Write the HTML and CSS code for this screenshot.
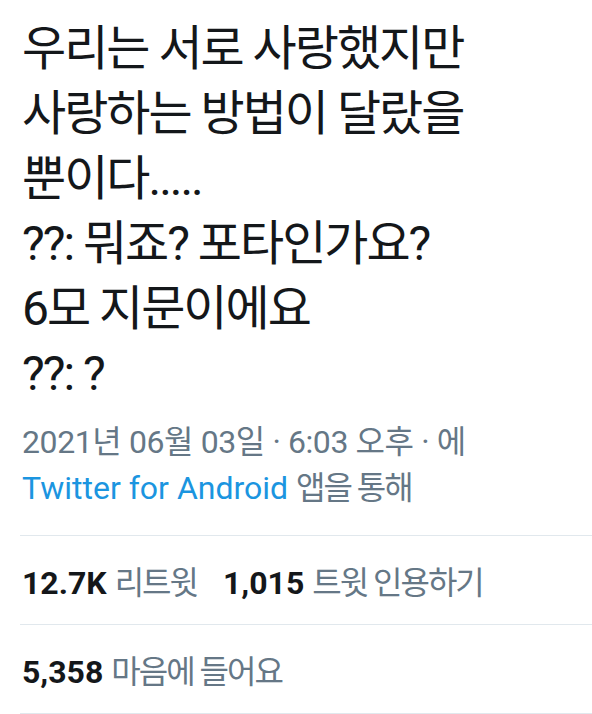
FILE: index.html
```html
<!DOCTYPE html>
<html lang="ko">
<head>
    <meta charset="UTF-8">
    <meta name="viewport" content="width=device-width, initial-scale=1.0">
    <title>트윗</title>
    <link rel="stylesheet" href="styles.css">
</head>
<body>

<div class="tweet">
    <p class="tweet-text">
        우리는 서로 사랑했지만<br>
        사랑하는 방법이 달랐을<br>
        뿐이다.....<br>
        ??: 뭐죠? 포타인가요?<br>
        6모 지문이에요<br>
        ??: ?
    </p>

    <div class="meta">
        <div class="fecha">2021년 06월 03일 · 6:03 오후 · 에</div>
        <div><a class="source" href="#">Twitter for Android</a> <span class="ko">앱을 통해</span></div>
    </div>

    <div class="stats">
        <div class="fila">
            <span class="item"><b>12.7K</b> <span class="ko">리트윗</span></span>
            <span class="item"><b>1,015</b> <span class="ko">트윗 인용하기</span></span>
        </div>
        <div class="fila ultima">
            <span class="item"><b>5,358</b> <span class="ko">마음에 들어요</span></span>
        </div>
    </div>
</div>

</body>
</html>
```

FILE: styles.css
```css
body {
    margin: 0;
    background: #fff;
    font-family: Roboto, "Noto Sans CJK KR", sans-serif;
    color: #14171a;
}

.tweet {
    padding-left: 22px;
}

.tweet-text {
    margin: 0;
    padding-top: 16px;
    font-size: 48px;
    line-height: 65px;
    letter-spacing: -2px;
}

.meta {
    margin-top: 13px;
    font-size: 32px;
    line-height: 46px;
    color: #657786;
}

.fecha {
    letter-spacing: -0.4px;
}

.ko {
    letter-spacing: -2px;
}

.source {
    color: #1b95e0;
    text-decoration: none;
}

.stats {
    margin-top: 24px;
    margin-left: -2px;
}

.fila {
    display: flex;
    align-items: center;
    gap: 24px;
    height: 88px;
    border-top: 1px solid #e1e8ed;
    font-size: 32px;
    color: #657786;
}

.fila.ultima {
    border-bottom: 1px solid #e1e8ed;
}

.item {
    padding-left: 2px;
}

.item b {
    color: #14171a;
    font-weight: 700;
}
```
